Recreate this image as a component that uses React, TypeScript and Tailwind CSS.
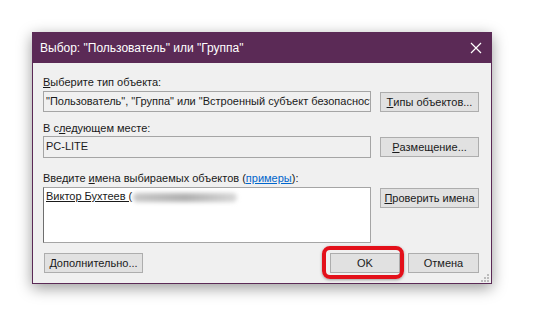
import React from 'react'

const font = { fontFamily: '"Liberation Sans", "Noto Sans", sans-serif' }

function Btn({ children, className = '' }: { children: React.ReactNode; className?: string }) {
  return (
    <div
      className={`flex items-center justify-center h-[20px] bg-[#e1e1e1] border border-[#adadad] text-[11px] text-[#1a1a1a] whitespace-nowrap ${className}`}
    >
      {children}
    </div>
  )
}

export default function App() {
  return (
    <div className="w-[538px] h-[316px] bg-white pt-[32px] pl-[32px] overflow-hidden" style={font}>
      <div className="w-[460px] h-[252px] flex flex-col border border-[#5b2a56] bg-[#f0f0f0] shadow-[0_4px_14px_rgba(0,0,0,0.4)]">
        {/* заголовок */}
        <div className="h-[30px] flex items-center justify-between bg-[#5b2a56] pl-[7px] pr-[9px] text-white text-[12px]">
          <span>Выбор: "Пользователь" или "Группа"</span>
          <svg width="12" height="12" viewBox="0 0 12 12">
            <path d="M1 1 L11 11 M11 1 L1 11" stroke="#fff" strokeWidth="1.2" />
          </svg>
        </div>

        <div className="flex-1 flex flex-col pt-[11px] pl-[10px] pr-[11px] text-[11px] text-[#1a1a1a]">
          <div className="h-[17px] leading-[16px]">
            <u>В</u>ыберите тип объекта:
          </div>
          <div className="flex items-end gap-[9px]">
            <div className="w-[328px] h-[21px] border border-[#a5a5a5] bg-[#f0f0f0] px-[2px] leading-[19px] whitespace-nowrap overflow-hidden">
              "Пользователь", "Группа" или "Встроенный субъект безопасност
            </div>
            <Btn className="w-[99px]">
              <u>Т</u>ипы объектов...
            </Btn>
          </div>

          <div className="h-[16px] leading-[16px] mt-[8px]">
            В с<u>л</u>едующем месте:
          </div>
          <div className="flex items-center gap-[9px]">
            <div className="w-[328px] h-[22px] border border-[#a5a5a5] bg-[#f0f0f0] px-[2px] leading-[18px]">PC-LITE</div>
            <Btn className="w-[99px]">
              <u>Р</u>азмещение...
            </Btn>
          </div>

          <div className="h-[17px] leading-[16px] mt-[12px]">
            Введите <u>и</u>мена выбираемых объектов (<span className="text-[#0066cc] underline">примеры</span>):
          </div>
          <div className="flex items-start gap-[9px]">
            <div className="w-[328px] h-[56px] border border-[#a5a5a5] border-l-[#6e6e6e] bg-white px-[2px] leading-[17px] whitespace-nowrap flex items-start">
              <span className="underline">Виктор Бухтеев (</span>
              <span className="ml-[1px] mt-[5px] w-[104px] h-[9px] rounded-full bg-gradient-to-r from-[#c8c8c8] via-[#b0b0b0] to-[#d8d8d8] blur-[2px]" />
            </div>
            <Btn className="w-[99px] mt-[1px]">
              <u>П</u>роверить имена
            </Btn>
          </div>

          <div className="flex items-center mt-[10px]">
            <Btn className="w-[99px] ml-[1px]">
              <u>Д</u>ополнительно...
            </Btn>
            <div className="relative ml-[187px]">
              <Btn className="w-[70px]">OK</Btn>
              <div className="absolute -left-[8px] -right-[4px] -top-[7px] -bottom-[6px] rounded-[8px] border-[4px] border-[#e3101a] shadow-[0_1px_3px_rgba(0,0,0,0.35)]" />
            </div>
            <Btn className="w-[71px] ml-[8px]">Отмена</Btn>
          </div>
          <div className="flex justify-end mt-[1px] -mr-[9px]">
            <svg width="8" height="8" viewBox="0 0 8 8">
              <rect x="6" y="0" width="2" height="2" fill="#bcbcbc" />
              <rect x="3" y="3" width="2" height="2" fill="#bcbcbc" />
              <rect x="6" y="3" width="2" height="2" fill="#bcbcbc" />
              <rect x="0" y="6" width="2" height="2" fill="#bcbcbc" />
              <rect x="3" y="6" width="2" height="2" fill="#bcbcbc" />
              <rect x="6" y="6" width="2" height="2" fill="#bcbcbc" />
            </svg>
          </div>
        </div>
      </div>
    </div>
  )
}
